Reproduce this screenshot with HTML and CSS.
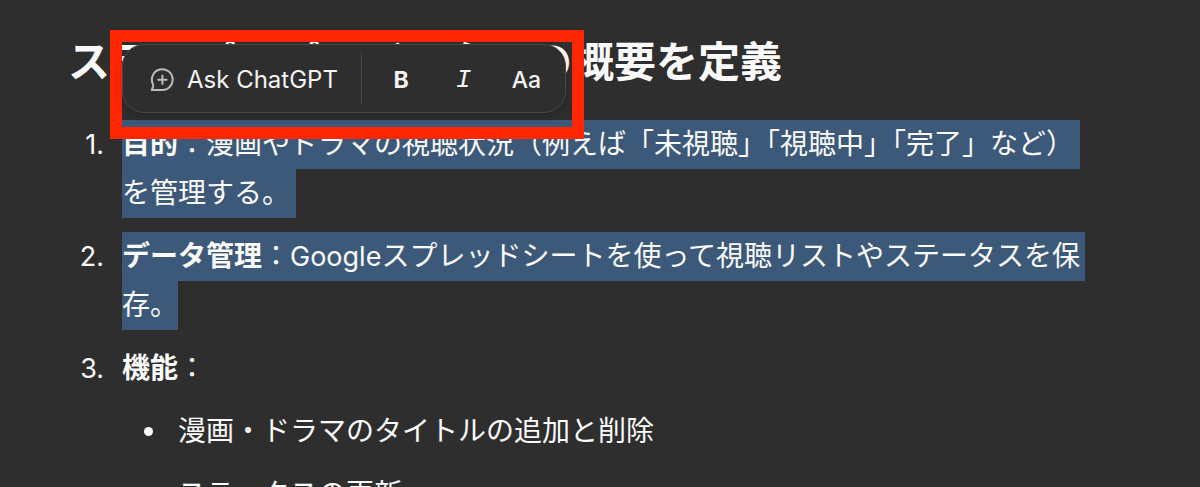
FILE: index.html
```html
<!DOCTYPE html>
<html lang="ja">
<head>
<meta charset="utf-8">
<meta name="viewport" content="width=device-width, initial-scale=1">
<title>プロジェクトの概要を定義</title>
<link rel="stylesheet" href="styles.css">
</head>
<body>
<main class="message">
  <h3 class="heading">ステップ1: プロジェクトの概要を定義</h3>
  <ol class="steps">
    <li class="step"><span class="number">1.</span>
      <div class="content">
        <span class="selected selected-break"><b>目的</b>：漫画やドラマの視聴状況（例えば「未視聴」「視聴中」「完了」など）</span>
        <span class="selected selected-break">を管理する。</span>
      </div>
    </li>
    <li class="step"><span class="number">2.</span>
      <div class="content">
        <span class="selected selected-wrap"><b>データ管理</b>：<span class="latin">Google</span>スプレッドシートを使って視聴リストやステータスを保</span>
        <span class="selected">存。</span>
      </div>
    </li>
    <li class="step"><span class="number">3.</span>
      <div class="content">
        <span><b>機能</b>：</span>
        <ul class="features">
          <li>漫画・ドラマのタイトルの追加と削除</li>
          <li>ステータスの更新</li>
        </ul>
      </div>
    </li>
  </ol>
  <div class="callout">
    <div class="toolbar" role="toolbar">
      <button class="ask" type="button">
        <svg class="icon" viewBox="0 0 24 24" fill="none" stroke="currentColor" stroke-width="2" stroke-linecap="round" stroke-linejoin="round" aria-hidden="true">
          <path d="M1.8 22H12.4A10.4 10.4 0 1 0 2.6 15.4C3.1 16.8 3.4 17.6 3.1 18.6Z"/>
          <path d="M12.4 7.6v8.4M8.2 11.8h8.4"/>
        </svg>
        Ask ChatGPT
      </button>
      <button class="format bold" type="button">B</button>
      <button class="format" type="button" aria-label="Italic">
        <span class="italic">I</span>
      </button>
      <button class="format" type="button">Aa</button>
    </div>
  </div>
</main>
</body>
</html>
```
FILE: styles.css
```css
* { box-sizing: border-box; }

body {
  margin: 0;
  height: 100vh;
  overflow: hidden;
  background: #2e2e2e;
  color: #fafafa;
  font: 28px/49px Inter, "Noto Sans CJK JP", sans-serif;
}

.message {
  position: relative;
  padding: 34px 72px 0 66px;
}

.heading {
  margin: 0 0 30px;
  padding-left: 2px;
  font-size: 42px;
  font-weight: 700;
  line-height: 56px;
  white-space: nowrap;
}

.steps, .features {
  display: flex;
  flex-direction: column;
  gap: 14px;
  margin: 0;
  padding: 0;
  list-style: none;
}

.step { display: flex; }

.number {
  flex: none;
  width: 56px;
  padding-right: 18px;
  text-align: right;
  font-size: 27px;
}

.content {
  display: flex;
  flex-direction: column;
  align-items: flex-start;
}

.selected {
  background: #3c5979;
  white-space: nowrap;
}

.selected-break { padding-right: 6px; }

.selected-wrap { padding-right: 5px; }

.latin { font-size: 27px; }

.features {
  margin-top: 14px;
  padding-left: 22px;
}

.features li {
  display: flex;
  align-items: center;
  gap: 25px;
}

.features li::before {
  content: "";
  width: 9px;
  height: 9px;
  border-radius: 50%;
  background: #fafafa;
}

.callout {
  position: absolute;
  top: 30px;
  left: 110px;
  padding: 2px 6px 14px 0;
  border: 12px solid #ff2600;
}

.toolbar {
  display: flex;
  align-items: center;
  width: 444px;
  height: 69px;
  padding: 8px 0;
  border: 1px solid #484848;
  border-radius: 22px;
  background: #2e2e2e;
  box-shadow: 0 4px 8px #00000026;
}

.toolbar button {
  height: 52px;
  margin: 0;
  border: 0;
  background: none;
  color: #f2f2f2;
  font: 24px/32px Inter, sans-serif;
}

.toolbar .ask {
  display: flex;
  align-items: center;
  gap: 13px;
  width: 239px;
  padding: 2px 0 0 27px;
  border-right: 1px solid #484848;
  white-space: nowrap;
}

.icon {
  width: 24px;
  height: 24px;
  color: #bdbdbd;
}

.toolbar .format {
  width: 63px;
  padding: 2px 0 0;
  font-size: 23px;
  font-weight: 500;
}

.toolbar .bold {
  width: 78px;
  margin-right: -8px;
  font-weight: 700;
}

.italic {
  font-family: "Liberation Mono", monospace;
  font-style: italic;
  font-size: 26px;
}
```
